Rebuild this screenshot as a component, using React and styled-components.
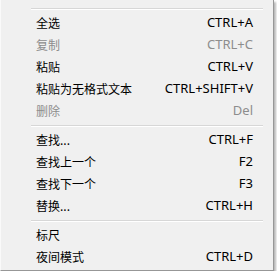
import React from "react";
import styled, { createGlobalStyle } from "styled-components";

const Global = createGlobalStyle`
  html, body { margin: 0; padding: 0; background: #ffffff; }
  body { font-family: "Noto Sans CJK SC", "Noto Sans", sans-serif; }
`;

const Menu = styled.div`
  box-sizing: border-box;
  width: 274px;
  height: 271px;
  background: #f0f0f0;
  border-right: 1px solid #979797;
  border-bottom: 1px solid #979797;
  border-left: 1px solid #fafafa;
  box-shadow: 2px 2px 2px rgba(0, 0, 0, 0.28);
  padding-top: 4px;
  display: flex;
  flex-direction: column;
`;

const Separator = styled.div`
  margin: 4px 10px 1px 30px;
  height: 0;
  border-top: 1px solid #d7d7d7;
  border-bottom: 1px solid #ffffff;
`;

const Item = styled.div`
  display: flex;
  align-items: center;
  justify-content: space-between;
  height: 22px;
  padding: 0 20px 0 35px;
  font-size: 12px;
  color: ${(p) => (p.$disabled ? "#8d8d8d" : "#000000")};
`;

const Label = styled.span`
  font-family: "Noto Sans CJK SC", sans-serif;
  font-size: 12px;
`;

const Shortcut = styled.span`
  font-family: "Noto Sans", "Open Sans", sans-serif;
  font-size: 13px;
`;

const groups = [
  [
    ["全选", "CTRL+A"],
    ["复制", "CTRL+C", true],
    ["粘贴", "CTRL+V"],
    ["粘贴为无格式文本", "CTRL+SHIFT+V"],
    ["删除", "Del", true],
  ],
  [
    ["查找...", "CTRL+F"],
    ["查找上一个", "F2"],
    ["查找下一个", "F3"],
    ["替换...", "CTRL+H"],
  ],
  [
    ["标尺", ""],
    ["夜间模式", "CTRL+D"],
  ],
];

export default function App() {
  return (
    <>
      <Global />
      <Menu>
        {groups.map((g, gi) => (
          <React.Fragment key={gi}>
            <Separator />
            {g.map(([label, sc, dis]) => (
              <Item key={label} $disabled={dis}>
                <Label>{label}</Label>
                <Shortcut>{sc}</Shortcut>
              </Item>
            ))}
          </React.Fragment>
        ))}
      </Menu>
    </>
  );
}
